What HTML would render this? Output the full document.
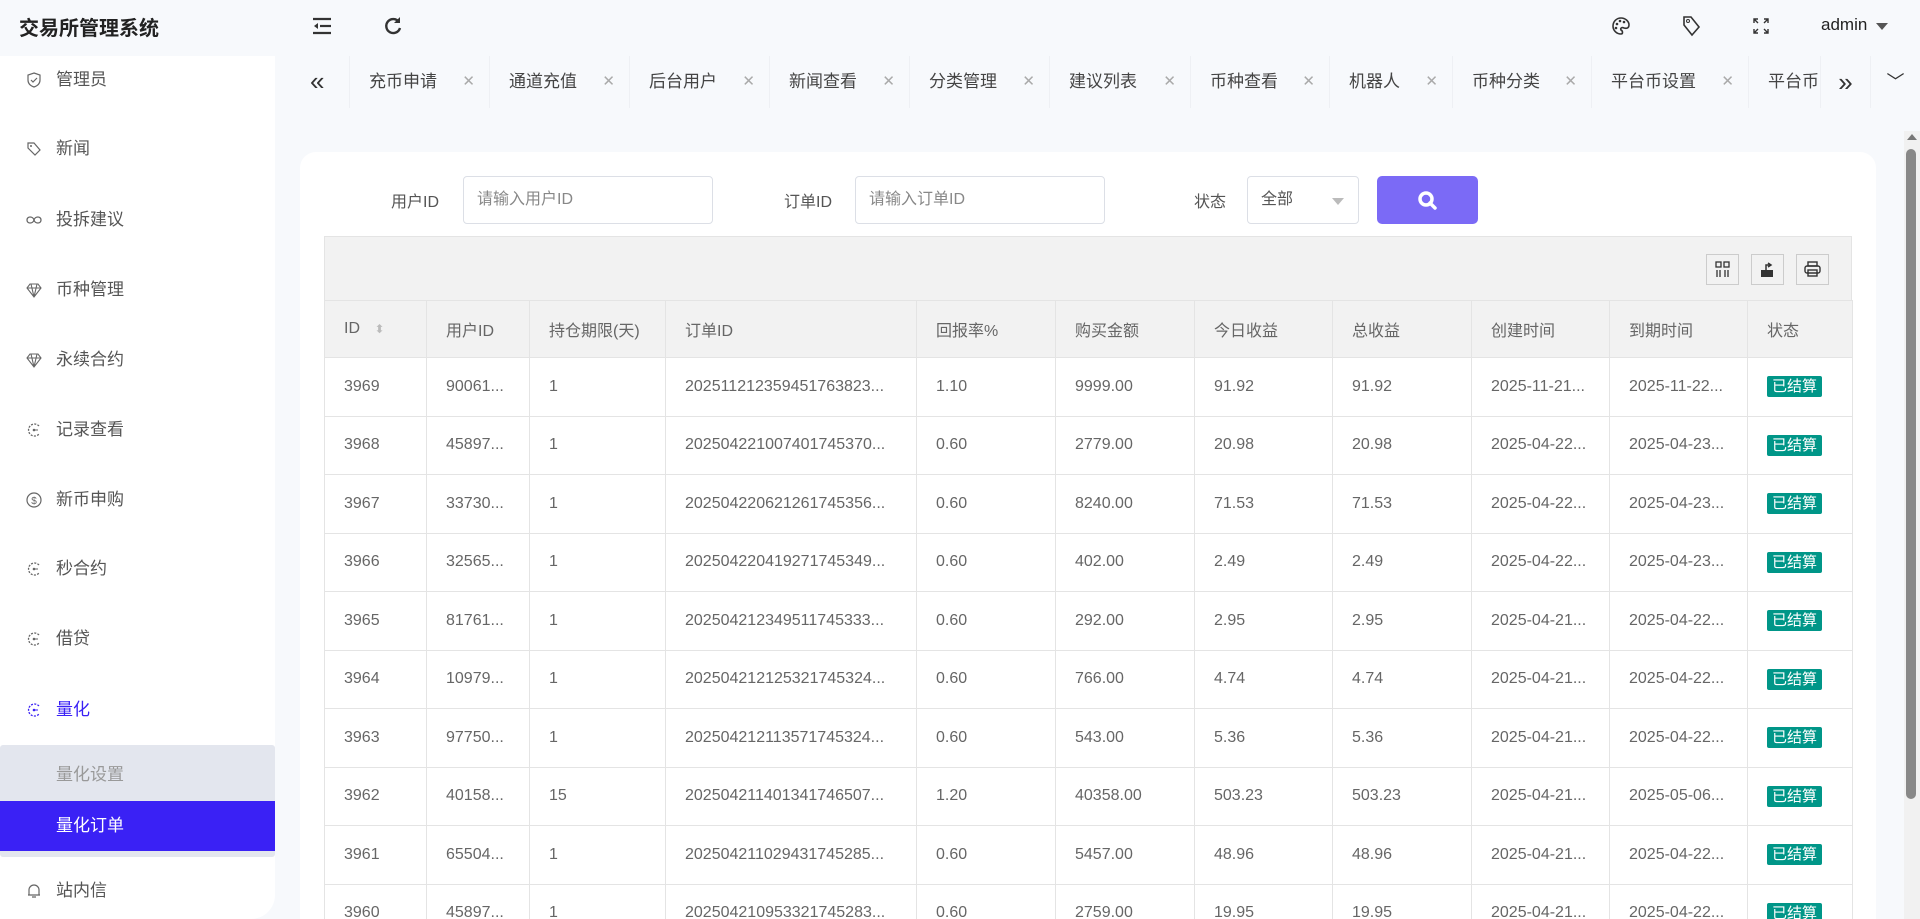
<!DOCTYPE html>
<html><head><meta charset="utf-8"><style>
*{box-sizing:border-box;margin:0;padding:0}
html{width:1920px;height:919px;overflow:hidden}
body{width:1920px;height:919px;overflow:hidden;background:#f7f9fc;font-family:"Liberation Sans","Noto Sans CJK SC",sans-serif;color:#606266;position:relative}
.title{position:absolute;left:19px;top:12px;font-size:20px;font-weight:bold;color:#222}
.side{position:absolute;left:0;top:56px;width:275px;height:863px;background:#fff;border-bottom-right-radius:24px}
.mi{position:absolute;left:0;width:275px;height:30px;font-size:17px;color:#555;line-height:30px}
.mi .ic{position:absolute;left:26px;top:7px;width:16px;height:16px}
.mi span.t{position:absolute;left:56px}
.sub{position:absolute;left:0;top:689px;width:275px;height:112px;background:#e3e6ee;border-radius:3px}
.tabs{position:absolute;left:300px;top:56px;height:52px;width:1620px}
.tab{position:absolute;top:0;height:52px;border-left:1px solid #eef0f4;font-size:17px;color:#444;line-height:52px}
.tab .x{position:absolute;right:14px;color:#aaa;font-size:15px}
.card{position:absolute;left:300px;top:152px;width:1576px;height:767px;background:#fff;border-radius:16px 16px 0 0}
.lbl{position:absolute;top:188px;font-size:16px;color:#555}
.inp{position:absolute;top:176px;height:48px;border:1px solid #dcdfe6;border-radius:4px;font-size:16px;color:#888;line-height:46px;padding-left:13px;background:#fff}
table{position:absolute;left:324px;top:300px;border-collapse:collapse;table-layout:fixed;width:1528px}
td,th{border:1px solid #e4e4e4;height:58.5px;padding-left:19px;font-size:16px;color:#666;font-weight:normal;text-align:left;white-space:nowrap;overflow:hidden}
th{background:#f2f2f2;height:57px}
.tag{display:inline-block;background:#009688;color:#fff;font-size:15px;padding:0 5px;line-height:21px;border-radius:2px}
.tb{position:absolute;top:254px;width:33px;height:31px;border:1px solid #ccc;background:#f2f2f2}
</style></head><body>
<div class="title">交易所管理系统</div>
<svg style="position:absolute;left:312px;top:17px" width="20" height="18" viewBox="0 0 20 18"><g stroke="#333" stroke-width="2.2"><line x1="1" y1="2" x2="19" y2="2"/><line x1="8" y1="9" x2="19" y2="9"/><line x1="1" y1="16" x2="19" y2="16"/></g><path d="M6 6 L2 9 L6 12Z" fill="#333"/></svg>
<svg style="position:absolute;left:383px;top:16px" width="20" height="20" viewBox="0 0 20 20"><path d="M16 6 A7 7 0 1 0 17 12" fill="none" stroke="#333" stroke-width="2.4"/><path d="M17 1 V7 H11Z" fill="#333"/></svg>
<svg style="position:absolute;left:1611px;top:16px" width="20" height="20" viewBox="0 0 20 20"><path d="M10 2 A8 8 0 1 0 10 18 C12 18 12 15 10 14 C9 12 11 11 13 12 C17 13 18 11 18 9 C18 5 14 2 10 2Z" fill="none" stroke="#333" stroke-width="1.6"/><circle cx="6" cy="8" r="1.3" fill="#333"/><circle cx="9" cy="5" r="1.3" fill="#333"/><circle cx="13" cy="6" r="1.3" fill="#333"/><circle cx="5" cy="12" r="1.3" fill="#333"/></svg>
<svg style="position:absolute;left:1681px;top:15px" width="20" height="22" viewBox="0 0 20 22"><path d="M3 2 L10 2 L18 12 L11 20 L3 10Z" fill="none" stroke="#333" stroke-width="1.6"/><circle cx="7" cy="6" r="1.5" fill="none" stroke="#333"/></svg>
<svg style="position:absolute;left:1753px;top:18px" width="16" height="16" viewBox="0 0 16 16"><g stroke="#333" stroke-width="1.4" fill="none"><path d="M1 5V1H5M11 1H15V5M15 11V15H11M5 15H1V11M1 1L5 5M15 1L11 5M15 15L11 11M1 15L5 11"/></g></svg>
<div style="position:absolute;left:1821px;top:15px;font-size:17px;color:#222">admin</div>
<div style="position:absolute;left:1876px;top:23px;border:6px solid transparent;border-top:7px solid #555"></div>

<div class="side">
<div class="sub"></div>
<div style="position:absolute;left:0;top:745px;width:275px;height:50px;background:#3a21f5"></div>
</div>
<div class="mi" style="top:65px"><svg class="ic" viewBox="0 0 16 16"><path d="M8 1 L14 3 V8 C14 12 11 14 8 15 C5 14 2 12 2 8 V3Z M5 8 L7 10 L11 6" fill="none" stroke="#666" stroke-width="1.2"/></svg><span class="t">管理员</span></div>
<div class="mi" style="top:134px"><svg class="ic" viewBox="0 0 16 16"><path d="M2 2 H8 L14 9 L9 14 L2 7Z" fill="none" stroke="#666" stroke-width="1.2"/><circle cx="5" cy="5" r="1" fill="#666"/></svg><span class="t">新闻</span></div>
<div class="mi" style="top:205px"><svg class="ic" viewBox="0 0 16 16"><path d="M1 8 C1 4 7 4 8 8 C9 12 15 12 15 8 C15 4 9 4 8 8 C7 12 1 12 1 8Z" fill="none" stroke="#666" stroke-width="1.3"/></svg><span class="t">投拆建议</span></div>
<div class="mi" style="top:275px"><svg class="ic" viewBox="0 0 16 16"><path d="M4 2 H12 L15 6 L8 15 L1 6Z M1 6 H15 M5 2 L8 15 M11 2 L8 15" fill="none" stroke="#666" stroke-width="1.1"/></svg><span class="t">币种管理</span></div>
<div class="mi" style="top:345px"><svg class="ic" viewBox="0 0 16 16"><path d="M4 2 H12 L15 6 L8 15 L1 6Z M1 6 H15 M5 2 L8 15 M11 2 L8 15" fill="none" stroke="#666" stroke-width="1.1"/></svg><span class="t">永续合约</span></div>
<div class="mi" style="top:415px"><svg class="ic" viewBox="0 0 16 16"><path d="M13 4 A6 6 0 1 0 13 12" fill="none" stroke="#666" stroke-width="1.3" stroke-dasharray="2 1.3"/><circle cx="8" cy="8" r="1.3" fill="#666"/><path d="M8 8 H12" stroke="#666"/></svg><span class="t">记录查看</span></div>
<div class="mi" style="top:485px"><svg class="ic" viewBox="0 0 16 16"><circle cx="8" cy="8" r="7" fill="none" stroke="#666" stroke-width="1.2"/><text x="8" y="12" font-size="10" text-anchor="middle" fill="#666">$</text></svg><span class="t">新币申购</span></div>
<div class="mi" style="top:554px"><svg class="ic" viewBox="0 0 16 16"><path d="M13 4 A6 6 0 1 0 13 12" fill="none" stroke="#666" stroke-width="1.3" stroke-dasharray="2 1.3"/><circle cx="8" cy="8" r="1.3" fill="#666"/><path d="M8 8 H12" stroke="#666"/></svg><span class="t">秒合约</span></div>
<div class="mi" style="top:624px"><svg class="ic" viewBox="0 0 16 16"><path d="M13 4 A6 6 0 1 0 13 12" fill="none" stroke="#666" stroke-width="1.3" stroke-dasharray="2 1.3"/><circle cx="8" cy="8" r="1.3" fill="#666"/><path d="M8 8 H12" stroke="#666"/></svg><span class="t">借贷</span></div>
<div class="mi" style="top:695px;color:#3a21f5"><svg class="ic" viewBox="0 0 16 16"><path d="M13 4 A6 6 0 1 0 13 12" fill="none" stroke="#3a21f5" stroke-width="1.3" stroke-dasharray="2 1.3"/><circle cx="8" cy="8" r="1.3" fill="#3a21f5"/><path d="M8 8 H12" stroke="#3a21f5"/></svg><span class="t">量化</span></div>
<div class="mi" style="top:760px;color:#999"><span class="t">量化设置</span></div>
<div class="mi" style="top:811px;color:#fff"><span class="t">量化订单</span></div>
<div class="mi" style="top:876px"><svg class="ic" viewBox="0 0 16 16"><path d="M3 12 V7 A5 5 0 0 1 13 7 V12 H2 M14 12 H13 M6 14 H10" fill="none" stroke="#666" stroke-width="1.2"/></svg><span class="t">站内信</span></div>

<div class="tabs">
<div style="position:absolute;left:10px;top:0;line-height:50px;font-size:26px;color:#333">«</div>
<div class="tab" style="left:49px;width:140px"><span style="margin-left:19px">充币申请</span><span class="x">✕</span></div>
<div class="tab" style="left:189px;width:140px"><span style="margin-left:19px">通道充值</span><span class="x">✕</span></div>
<div class="tab" style="left:329px;width:140px"><span style="margin-left:19px">后台用户</span><span class="x">✕</span></div>
<div class="tab" style="left:469px;width:140px"><span style="margin-left:19px">新闻查看</span><span class="x">✕</span></div>
<div class="tab" style="left:609px;width:140px"><span style="margin-left:19px">分类管理</span><span class="x">✕</span></div>
<div class="tab" style="left:749px;width:141px"><span style="margin-left:19px">建议列表</span><span class="x">✕</span></div>
<div class="tab" style="left:890px;width:139px"><span style="margin-left:19px">币种查看</span><span class="x">✕</span></div>
<div class="tab" style="left:1029px;width:123px"><span style="margin-left:19px">机器人</span><span class="x">✕</span></div>
<div class="tab" style="left:1152px;width:139px"><span style="margin-left:19px">币种分类</span><span class="x">✕</span></div>
<div class="tab" style="left:1291px;width:157px"><span style="margin-left:19px">平台币设置</span><span class="x">✕</span></div>
<div class="tab" style="left:1448px;width:73px;overflow:hidden"><span style="margin-left:19px">平台币</span></div>
<div class="tab" style="left:1520px;width:50px;background:#f7f9fc;font-size:26px;text-align:center;color:#333">»</div>
<div class="tab" style="left:1570px;width:50px;text-align:center;font-size:18px;color:#333">﹀</div>
</div>

<div class="card"></div>
<div class="lbl" style="left:391px">用户ID</div>
<div class="inp" style="left:463px;width:250px">请输入用户ID</div>
<div class="lbl" style="left:784px">订单ID</div>
<div class="inp" style="left:855px;width:250px">请输入订单ID</div>
<div class="lbl" style="left:1194px">状态</div>
<div class="inp" style="left:1247px;width:112px;color:#555">全部<span style="position:absolute;right:14px;top:21px;border:6px solid transparent;border-top:7px solid #bbb"></span></div>
<div style="position:absolute;left:1377px;top:176px;width:101px;height:48px;background:#7b6af6;border-radius:5px"><svg style="position:absolute;left:40px;top:14px" width="22" height="22" viewBox="0 0 22 22"><circle cx="9" cy="9" r="6" fill="none" stroke="#fff" stroke-width="3.5"/><path d="M13 13 L18 18" stroke="#fff" stroke-width="3.5" stroke-linecap="round"/></svg></div>

<div style="position:absolute;left:324px;top:236px;width:1528px;height:64px;background:#f2f2f2;border:1px solid #e4e4e4;border-bottom:none"></div>
<div class="tb" style="left:1706px"><svg width="31" height="29" viewBox="0 0 31 29"><g fill="none" stroke="#333" stroke-width="1.3"><rect x="9" y="7" width="5" height="5"/><rect x="17" y="7" width="5" height="5"/><path d="M10 15V22M13 15V22M18 15V22M21 15V22"/></g></svg></div>
<div class="tb" style="left:1751px"><svg width="31" height="29" viewBox="0 0 31 29"><path d="M9 15H21V22H9Z" fill="#333"/><path d="M14 15V10H18M16 8L19 10L16 12" fill="none" stroke="#333" stroke-width="1.5"/></svg></div>
<div class="tb" style="left:1796px"><svg width="31" height="29" viewBox="0 0 31 29"><g fill="none" stroke="#333" stroke-width="1.4"><rect x="11" y="7" width="9" height="4"/><rect x="8" y="11" width="15" height="7" rx="2"/><rect x="11" y="15" width="9" height="6"/></g></svg></div>

<table>
<colgroup><col style="width:102px"><col style="width:103px"><col style="width:136px"><col style="width:251px"><col style="width:139px"><col style="width:139px"><col style="width:138px"><col style="width:139px"><col style="width:138px"><col style="width:138px"><col style="width:105px"></colgroup>
<tr><th>ID <span style="color:#bbb;font-size:12px;margin-left:10px">⬍</span></th><th>用户ID</th><th>持仓期限(天)</th><th>订单ID</th><th>回报率%</th><th>购买金额</th><th>今日收益</th><th>总收益</th><th>创建时间</th><th>到期时间</th><th>状态</th></tr>
<tr><td>3969</td><td>90061...</td><td>1</td><td>20251121235945176382​3...</td><td>1.10</td><td>9999.00</td><td>91.92</td><td>91.92</td><td>2025-11-21...</td><td>2025-11-22...</td><td><span class="tag">已结算</span></td></tr>
<tr><td>3968</td><td>45897...</td><td>1</td><td>20250422100740174537​0...</td><td>0.60</td><td>2779.00</td><td>20.98</td><td>20.98</td><td>2025-04-22...</td><td>2025-04-23...</td><td><span class="tag">已结算</span></td></tr>
<tr><td>3967</td><td>33730...</td><td>1</td><td>20250422062126174535​6...</td><td>0.60</td><td>8240.00</td><td>71.53</td><td>71.53</td><td>2025-04-22...</td><td>2025-04-23...</td><td><span class="tag">已结算</span></td></tr>
<tr><td>3966</td><td>32565...</td><td>1</td><td>20250422041927174534​9...</td><td>0.60</td><td>402.00</td><td>2.49</td><td>2.49</td><td>2025-04-22...</td><td>2025-04-23...</td><td><span class="tag">已结算</span></td></tr>
<tr><td>3965</td><td>81761...</td><td>1</td><td>20250421234951174533​3...</td><td>0.60</td><td>292.00</td><td>2.95</td><td>2.95</td><td>2025-04-21...</td><td>2025-04-22...</td><td><span class="tag">已结算</span></td></tr>
<tr><td>3964</td><td>10979...</td><td>1</td><td>20250421212532174532​4...</td><td>0.60</td><td>766.00</td><td>4.74</td><td>4.74</td><td>2025-04-21...</td><td>2025-04-22...</td><td><span class="tag">已结算</span></td></tr>
<tr><td>3963</td><td>97750...</td><td>1</td><td>20250421211357174532​4...</td><td>0.60</td><td>543.00</td><td>5.36</td><td>5.36</td><td>2025-04-21...</td><td>2025-04-22...</td><td><span class="tag">已结算</span></td></tr>
<tr><td>3962</td><td>40158...</td><td>15</td><td>20250421140134174650​7...</td><td>1.20</td><td>40358.00</td><td>503.23</td><td>503.23</td><td>2025-04-21...</td><td>2025-05-06...</td><td><span class="tag">已结算</span></td></tr>
<tr><td>3961</td><td>65504...</td><td>1</td><td>20250421102943174528​5...</td><td>0.60</td><td>5457.00</td><td>48.96</td><td>48.96</td><td>2025-04-21...</td><td>2025-04-22...</td><td><span class="tag">已结算</span></td></tr>
<tr><td>3960</td><td>45897...</td><td>1</td><td>20250421095332174528​3...</td><td>0.60</td><td>2759.00</td><td>19.95</td><td>19.95</td><td>2025-04-21...</td><td>2025-04-22...</td><td><span class="tag">已结算</span></td></tr>
</table>

<div style="position:absolute;left:1904px;top:131px;width:16px;height:788px;background:#f1f1f1"></div>
<div style="position:absolute;left:1907px;top:134px;border:5px solid transparent;border-bottom:6px solid #777;border-top:none"></div>
<div style="position:absolute;left:1906px;top:149px;width:10px;height:650px;background:#888;border-radius:5px"></div>
</body></html>
